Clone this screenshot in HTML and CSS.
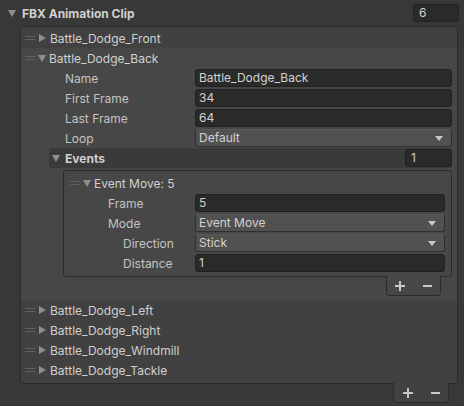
FILE: index.html
```html
<!DOCTYPE html>
<html>
<head>
<meta charset="utf-8">
<link rel="stylesheet" href="styles.css">
</head>
<body>
<div class="header">
  <span class="arrow down"></span>
  <span class="title">FBX Animation Clip</span>
  <div class="count">6</div>
</div>
<div class="list-wrap">
  <div class="list">
    <div class="elem"><span class="handle"></span><span class="arrow right"></span><span class="name">Battle_Dodge_Front</span></div>
    <div class="expanded">
      <div class="elem"><span class="handle"></span><span class="arrow down"></span><span class="name">Battle_Dodge_Back</span></div>
      <div class="props">
        <div class="prop"><span class="label">Name</span><div class="field">Battle_Dodge_Back</div></div>
        <div class="prop"><span class="label">First Frame</span><div class="field">34</div></div>
        <div class="prop"><span class="label">Last Frame</span><div class="field">64</div></div>
        <div class="prop"><span class="label">Loop</span><div class="dropdown">Default<span class="caret"></span></div></div>
      </div>
      <div class="events-head"><span class="arrow down"></span><span class="title">Events</span><div class="count small">1</div></div>
      <div class="events-wrap">
        <div class="events-box">
          <div class="elem inner"><span class="handle"></span><span class="arrow down"></span><span class="name">Event Move: 5</span></div>
          <div class="props inner-props">
            <div class="prop"><span class="label">Frame</span><div class="field">5</div></div>
            <div class="prop"><span class="label">Mode</span><div class="dropdown">Event Move<span class="caret"></span></div></div>
            <div class="prop"><span class="label sub">Direction</span><div class="dropdown">Stick<span class="caret"></span></div></div>
            <div class="prop"><span class="label sub">Distance</span><div class="field">1</div></div>
          </div>
        </div>
        <div class="footer events-footer"><span class="plus"></span><span class="minus"></span></div>
      </div>
    </div>
    <div class="elem"><span class="handle"></span><span class="arrow right"></span><span class="name">Battle_Dodge_Left</span></div>
    <div class="elem"><span class="handle"></span><span class="arrow right"></span><span class="name">Battle_Dodge_Right</span></div>
    <div class="elem"><span class="handle"></span><span class="arrow right"></span><span class="name">Battle_Dodge_Windmill</span></div>
    <div class="elem"><span class="handle"></span><span class="arrow right"></span><span class="name">Battle_Dodge_Tackle</span></div>
  </div>
  <div class="footer main-footer"><span class="plus"></span><span class="minus"></span></div>
</div>
</body>
</html>
```
FILE: styles.css
```css
* { box-sizing: border-box; }
html, body { margin: 0; padding: 0; }
body {
  width: 464px;
  height: 406px;
  overflow: hidden;
  background: #383838;
  font-family: Inter, "Noto Sans", sans-serif;
  font-size: 12px;
  color: #c4c4c4;
}
.header {
  display: flex;
  align-items: center;
  height: 18px;
  margin-top: 4px;
  padding-left: 8px;
  padding-right: 5px;
}
.title {
  font-weight: 700;
  color: #d0d0d0;
  margin-left: 6px;
}
.count {
  margin-left: auto;
  width: 46px;
  height: 18px;
  background: #2a2a2a;
  border: 1px solid #212121;
  border-radius: 3px;
  padding-left: 5px;
  line-height: 16px;
  color: #d2d2d2;
}
.arrow { display: inline-block; width: 0; height: 0; flex: none; }
.arrow.down {
  border-left: 4px solid transparent;
  border-right: 4px solid transparent;
  border-top: 7px solid #8e8e8e;
}
.arrow.right {
  border-top: 4px solid transparent;
  border-bottom: 4px solid transparent;
  border-left: 7px solid #8e8e8e;
}
.list-wrap {
  margin: 4px 6px 0 20px;
  display: flex;
  flex-direction: column;
}
.list {
  background: #414141;
  border: 1px solid #2b2b2b;
  border-radius: 3px;
  padding: 1px 0 3px;
}
.elem {
  display: flex;
  align-items: center;
  height: 20px;
  padding-left: 4px;
  color: #d0d0d0;
}
.handle {
  width: 10px;
  height: 4px;
  border-top: 1px solid #606060;
  border-bottom: 1px solid #606060;
  margin-right: 4px;
  flex: none;
}
.elem .arrow.right { margin-right: 4px; margin-left: 0; }
.elem .arrow.down { margin-right: 3px; margin-left: -1px; }
.expanded {
  background: #474747;
  padding-bottom: 4px;
}
.props {
  margin-left: 44px;
  margin-right: 5px;
}
.prop {
  display: grid;
  grid-template-columns: 130px 1fr;
  align-items: center;
  height: 20px;
}
.label { color: #c4c4c4; }
.field {
  height: 18px;
  background: #2a2a2a;
  border: 1px solid #212121;
  border-radius: 3px;
  padding-left: 3px;
  line-height: 16px;
  color: #d2d2d2;
}
.dropdown {
  position: relative;
  height: 18px;
  background: #515151;
  border: 1px solid #303030;
  border-top-color: #595959;
  border-radius: 3px;
  padding-left: 3px;
  line-height: 16px;
  color: #d2d2d2;
}
.caret {
  position: absolute;
  right: 8px;
  top: 6px;
  width: 0;
  height: 0;
  border-left: 4px solid transparent;
  border-right: 4px solid transparent;
  border-top: 5px solid #c8c8c8;
}
.events-head {
  display: flex;
  align-items: center;
  height: 20px;
  margin-left: 28px;
  margin-right: 5px;
  background: #3a3a3a;
  padding-left: 3px;
}
.events-head .title { margin-left: 5px; }
.count.small { width: 47px; height: 18px; }
.events-wrap {
  margin-left: 42px;
  margin-right: 5px;
  margin-top: 2px;
  display: flex;
  flex-direction: column;
}
.events-box {
  background: #474747;
  border: 1px solid #2b2b2b;
  border-radius: 3px;
  padding: 2px 0 3px;
}
.elem.inner { padding-left: 6px; }
.inner-props {
  margin-left: 44px;
  margin-right: 6px;
}
.inner-props .prop { grid-template-columns: 87px 1fr; }
.label.sub { padding-left: 15px; }
.footer {
  align-self: flex-end;
  display: flex;
  align-items: center;
  justify-content: space-around;
  height: 20px;
  background: #414141;
  border: 1px solid #2b2b2b;
  border-top: none;
  border-radius: 0 0 4px 4px;
  margin-top: -1px;
}
.plus, .minus {
  position: relative;
  display: block;
  width: 10px;
  height: 10px;
}
.plus::before, .minus::before {
  content: "";
  position: absolute;
  left: 0;
  top: 4px;
  width: 10px;
  height: 2px;
  background: #c8c8c8;
}
.plus::after {
  content: "";
  position: absolute;
  left: 4px;
  top: 0;
  width: 2px;
  height: 10px;
  background: #c8c8c8;
}
.minus::before { left: 1px; width: 9px; }
.events-footer { width: 55px; margin-right: 11px; background: #474747; }
.main-footer { width: 56px; margin-right: 9px; }
```
